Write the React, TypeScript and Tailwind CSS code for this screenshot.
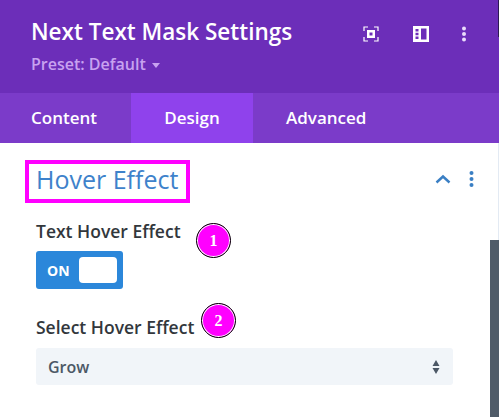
const font = { fontFamily: '"Open Sans", sans-serif' };

function Badge({ n }: { n: string }) {
  return (
    <div className="absolute flex h-[35px] w-[35px] items-center justify-center rounded-full border border-black bg-[#ff00ff] text-[16px] font-bold text-white shadow-[inset_0_0_0_1px_white] [font-family:'Liberation_Serif',serif]">
      {n}
    </div>
  );
}

export default function App() {
  return (
    <div style={font} className="relative h-[417px] w-[499px] overflow-hidden bg-white">
      {/* Header */}
      <div className="flex h-[93px] bg-[#6c2eb9] pl-[31px] pr-[33px] pt-[17px]">
        <div className="flex-1">
          <div className="text-[22.5px] font-semibold leading-[30px] text-white">Next Text Mask Settings</div>
          <div className="mt-[7px] flex items-center gap-[6px] text-[16px] font-semibold leading-[20px] text-[#c8a2f0]">
            Preset: Default
            <span className="mt-[2px] h-0 w-0 border-x-[4px] border-t-[5px] border-x-transparent border-t-[#c8a2f0]" />
          </div>
        </div>
        <div className="flex h-[32px] items-center gap-[34px] pt-[1px]">
          <svg width="16" height="16" viewBox="0 0 16 16" className="text-white">
            <path d="M1 5V1h4M11 1h4v4M15 11v4h-4M5 15H1v-4" fill="none" stroke="currentColor" strokeWidth="1.2" />
            <path fillRule="evenodd" d="M4 4h8v8H4zM6.500 6.500v3h3v-3z" fill="currentColor" />
          </svg>
          <svg width="16" height="16" viewBox="0 0 16 16" className="text-white">
            <path fillRule="evenodd" d="M0 0h16v16H0zM8 2.500v11h5.500v-11zM2.500 3v2.500h3V3zM2.500 6.800v2.400h3V6.800zM2.500 10.500V13h3v-2.500z" fill="currentColor" />
          </svg>
          <svg width="4" height="16" viewBox="0 0 4 16" className="ml-[-1px] text-[#eadcfb]">
            <circle cx="2" cy="2.500" r="2" fill="currentColor" />
            <circle cx="2" cy="8" r="2" fill="currentColor" />
            <circle cx="2" cy="13.500" r="2" fill="currentColor" />
          </svg>
        </div>
      </div>

      {/* Tabs */}
      <div className="flex h-[50px] bg-[#7b3bc9] text-[17px] font-semibold text-white">
        <div className="flex w-[131px] items-center pl-[31px]">Content</div>
        <div className="flex w-[122px] items-center justify-center bg-[#8f42ec]">Design</div>
        <div className="flex items-center pl-[33px]">Advanced</div>
      </div>

      {/* Section */}
      <div className="pl-[36px] pr-[25px]">
        <div className="flex items-center justify-between pt-[20px]">
          <div className="text-[25px] leading-[32px] text-[#3e82cb]">Hover Effect</div>
          <div className="flex items-center gap-[18px]">
            <svg width="16" height="10" viewBox="0 0 16 10">
              <path d="M1.500 8.500 8 2.500l6.500 6" fill="none" stroke="#3a7fc4" strokeWidth="2.400" />
            </svg>
            <svg width="5" height="16" viewBox="0 0 5 16" className="text-[#3a7fc4]">
              <circle cx="2.500" cy="2" r="2" fill="currentColor" />
              <circle cx="2.500" cy="8" r="2" fill="currentColor" />
              <circle cx="2.500" cy="14" r="2" fill="currentColor" />
            </svg>
          </div>
        </div>

        <div className="mt-[25px] text-[17.500px] font-semibold leading-[22px] text-[#32373c]">Text Hover Effect</div>
        <div className="mt-[9px] flex h-[38px] w-[87px] items-center rounded-[3px] bg-[#2b87da] pl-[11px] pr-[6px]">
          <span className="flex-1 text-[14px] font-bold text-white">ON</span>
          <span className="h-[26px] w-[38px] rounded-[4px] bg-white" />
        </div>

        <div className="mt-[27px] text-[17.500px] font-semibold leading-[22px] text-[#32373c]">Select Hover Effect</div>
        <div className="mt-[10px] flex h-[37px] w-[417px] items-center justify-between rounded-[3px] bg-[#f1f5f9] pl-[12px] pr-[13px] text-[16px] font-semibold text-[#4c5866]">
          Grow
          <svg width="8" height="16" viewBox="0 0 8 16" className="text-[#4c5866]">
            <path d="M4 1l3.500 6H.5zM4 15l3.500-6H.5z" fill="currentColor" />
          </svg>
        </div>
      </div>

      {/* Annotations */}
      <div className="absolute left-[25px] top-[160px] h-[43px] w-[165px] border-[4px] border-[#ff00ff]" />
      <div className="absolute left-[196px] top-[223px]"><Badge n="1" /></div>
      <div className="absolute left-[201px] top-[303px]"><Badge n="2" /></div>

      {/* Scrollbar */}
      <div className="absolute right-0 top-[143px] h-[274px] w-[9px] border-r border-[#e3eaf3]" />
      <div className="absolute right-0 top-[240px] h-[177px] w-[9px] bg-[#4f5b68]" />
      <div className="absolute right-0 top-0 h-[37px] w-px bg-[#2d1a55]" />
    </div>
  );
}
